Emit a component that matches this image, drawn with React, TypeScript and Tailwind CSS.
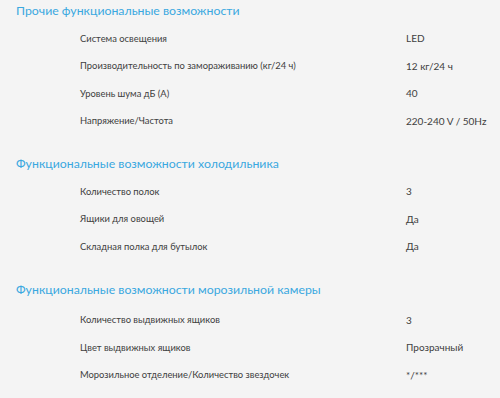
const sections = [
  {
    title: "Прочие функциональные возможности",
    rows: [
      ["Система освещения", "LED"],
      ["Производительность по замораживанию (кг/24 ч)", "12 кг/24 ч"],
      ["Уровень шума дБ (A)", "40"],
      ["Напряжение/Частота", "220-240 V / 50Hz"],
    ],
  },
  {
    title: "Функциональные возможности холодильника",
    rows: [
      ["Количество полок", "3"],
      ["Ящики для овощей", "Да"],
      ["Складная полка для бутылок", "Да"],
    ],
  },
  {
    title: "Функциональные возможности морозильной камеры",
    rows: [
      ["Количество выдвижных ящиков", "3"],
      ["Цвет выдвижных ящиков", "Прозрачный"],
      ["Морозильное отделение/Количество звездочек", "*/***"],
    ],
  },
];

export default function App() {
  return (
    <div className="w-[500px] h-[398px] overflow-hidden bg-[#f4f4f4] font-['Lato',sans-serif]">
      {sections.map((s, i) => (
        <section key={s.title} className="mb-[18px]">
          <h2 className="h-[22px] pl-[16px] text-[12.3px] leading-[22px] text-[#3aa8e0]">
            {s.title}
          </h2>
          <div className={i === 2 ? "mt-[6px]" : "mt-[3px]"}>
            {s.rows.map(([k, v]) => (
              <div key={k} className="flex h-[27.5px] items-center text-[10px] text-[#404040]">
                <span className="w-[406px] shrink-0 pl-[80px] text-[9.4px]">{k}</span>
                <span>{v}</span>
              </div>
            ))}
          </div>
        </section>
      ))}
    </div>
  );
}
